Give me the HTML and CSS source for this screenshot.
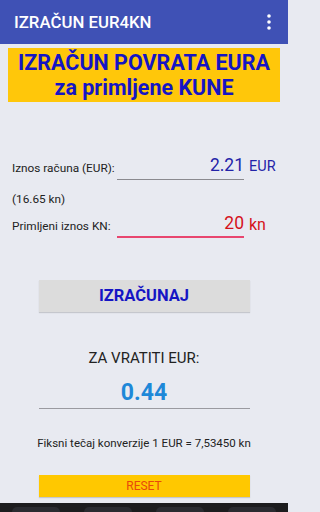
FILE: index.html
```html
<!DOCTYPE html>
<html lang="hr">
<head>
<meta charset="utf-8">
<link rel="stylesheet" href="styles.css">
</head>
<body>
<div class="app">
  <header class="appbar">
    <span class="title">IZRAČUN EUR4KN</span>
    <svg class="menu" width="4" height="16" viewBox="0 0 4 16"><circle cx="2" cy="2" r="1.8" fill="#fff"/><circle cx="2" cy="8" r="1.8" fill="#fff"/><circle cx="2" cy="14" r="1.8" fill="#fff"/></svg>
  </header>
  <div class="banner">
    <div>IZRAČUN POVRATA EURA</div>
    <div>za primljene KUNE</div>
  </div>
  <div class="form">
    <div class="row">
      <span class="label">Iznos računa (EUR):</span>
      <span class="field blue-field"><span class="val blue">2.21</span></span>
      <span class="unit blue">EUR</span>
    </div>
    <div class="sub">(16.65 kn)</div>
    <div class="row row2">
      <span class="label">Primljeni iznos KN:</span>
      <span class="field red-field"><span class="val red">20</span></span>
      <span class="unit red unit-kn">kn</span>
    </div>
  </div>
  <div class="btn calc">IZRAČUNAJ</div>
  <div class="result-label">ZA VRATITI EUR:</div>
  <div class="result">0.44</div>
  <div class="rate">Fiksni tečaj konverzije 1 EUR = 7,53450 kn</div>
  <div class="btn reset">RESET</div>
  <div class="navbar"><span></span><span></span><span></span><span></span></div>
</div>
</body>
</html>
```
FILE: styles.css
```css
* { box-sizing: border-box; }
html { background: #e8eaf1; }
html, body { margin: 0; padding: 0; }
body {
  width: 288px;
  height: 512px;
  overflow: hidden;
  background: #e8eaf1;
  font-family: Roboto, "Liberation Sans", sans-serif;
}
.app { display: flex; flex-direction: column; height: 512px; }
.appbar {
  height: 44px;
  background: #3f51b5;
  display: flex;
  align-items: center;
  justify-content: space-between;
  padding: 0 17px 0 14px;
  flex-shrink: 0;
}
.title { color: #fff; font-size: 16.8px; font-weight: 500; }
.menu { display: block; }
.banner {
  margin: 4px 8px 0 8px;
  height: 54px;
  background: #ffc70a;
  color: #1515c4;
  font-weight: bold;
  font-size: 21.5px;
  line-height: 25px;
  text-align: center;
  padding-top: 2px;
  white-space: nowrap;
}
.form { padding: 0 0 0 12px; margin-top: 52px; }
.row {
  display: flex;
  align-items: flex-end;
  height: 26px;
}
.label { width: 105px; font-size: 11.8px; color: #222; padding-bottom: 5px; white-space: nowrap; }
.field {
  width: 127px;
  height: 26px;
  display: flex;
  justify-content: flex-end;
  align-items: flex-end;
  padding-bottom: 4px;
}
.blue-field { border-bottom: 1px solid #8a8a8f; }
.red-field { border-bottom: 2px solid #e8466f; padding-bottom: 3px; }
.val { font-size: 17.5px; line-height: 20px; }
.unit { font-size: 14.5px; padding-left: 5px; padding-bottom: 5px; }
.unit-kn { font-size: 16px; padding-bottom: 4px; }
.blue { color: #2323a8; }
.red { color: #d5121b; }
.sub { font-size: 11.8px; color: #222; margin-top: 12px; height: 20px; }
.row2 { margin-top: 0; }
.btn {
  margin: 0 auto;
  width: 211px;
  text-align: center;
}
.calc {
  margin-top: 42px;
  height: 32px;
  background: #dcdcdc;
  color: #1515c4;
  font-weight: bold;
  font-size: 16.5px;
  line-height: 32px;
  box-shadow: 0 1px 1px rgba(0,0,0,0.15);
}
.result-label {
  margin-top: 37px;
  text-align: center;
  font-size: 15px;
  color: #222;
}
.result {
  margin: 12px auto 0 auto;
  width: 211px;
  text-align: center;
  font-size: 23px;
  font-weight: bold;
  color: #1e88d8;
  padding-bottom: 2px;
  border-bottom: 1px solid #9a9aa0;
}
.rate {
  margin-top: 27px;
  text-align: center;
  font-size: 11.5px;
  color: #222;
}
.reset {
  margin-top: 25px;
  height: 22px;
  background: #ffc800;
  color: #e8490a;
  font-size: 12px;
  line-height: 22px;
  box-shadow: 0 1px 1px rgba(0,0,0,0.15);
}
.navbar {
  margin-top: auto;
  height: 9px;
  background: #1c1c1e;
  display: flex;
  justify-content: space-between;
  align-items: flex-end;
  padding: 0 12px;
}
.navbar span {
  width: 48px;
  height: 5px;
  border-radius: 6px 6px 0 0;
  background: #2a2b30;
}
```
